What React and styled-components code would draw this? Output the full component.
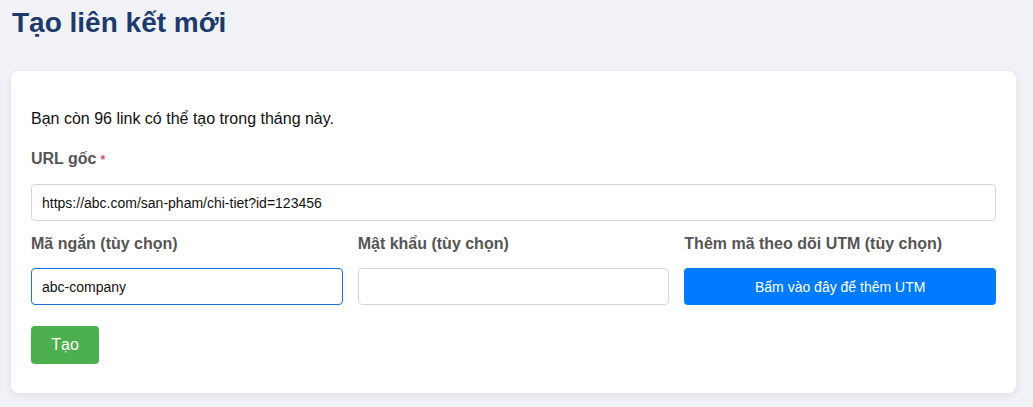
import React, { useState } from "react";
import styled, { createGlobalStyle } from "styled-components";

const GlobalStyle = createGlobalStyle`
  html, body {
    margin: 0;
    padding: 0;
    background: #f0f2f5;
    font-family: "Liberation Sans", Arial, sans-serif;
  }
  * { box-sizing: border-box; }
`;

const Page = styled.div`
  padding: 0 17px 0 11px;
  min-height: 407px;
`;

const Title = styled.h1`
  margin: 0;
  padding: 7px 0 0 1px;
  height: 71px;
  font-size: 28px;
  font-weight: 700;
  color: #1e3a6b;
`;

const Card = styled.div`
  background: #fff;
  border-radius: 8px;
  box-shadow: 0 2px 8px rgba(0, 0, 0, 0.08);
  padding: 39px 20px 29px;
`;

const Note = styled.p`
  margin: 0 0 22px;
  font-size: 16px;
  line-height: 18px;
  color: #111;
`;

const Field = styled.div`
  display: flex;
  flex-direction: column;
  gap: 15px;
`;

const Label = styled.label`
  font-size: 16px;
  line-height: 18px;
  font-weight: 700;
  color: #555;
`;

const Req = styled.span`
  color: #e0465a;
  font-size: 12px;
  margin-left: 4px;
`;

const Input = styled.input`
  height: 37px;
  width: 100%;
  padding: 0 10px;
  border: 1px solid ${(p) => (p.$focus ? "#1a73d9" : "#d6d6d6")};
  border-radius: 4px;
  font-family: inherit;
  font-size: 14px;
  color: #111;
  outline: none;
`;

const Row = styled.div`
  display: grid;
  grid-template-columns: repeat(3, 1fr);
  gap: 15px;
  margin-top: 14px;
`;

const UtmButton = styled.button`
  height: 37px;
  border: none;
  border-radius: 4px;
  background: #007bff;
  color: #fff;
  font-family: inherit;
  font-size: 14px;
  cursor: pointer;
`;

const Submit = styled.button`
  margin-top: 21px;
  width: 68px;
  height: 38px;
  border: none;
  border-radius: 4px;
  background: #4caf50;
  color: #fff;
  font-family: inherit;
  font-size: 16px;
  cursor: pointer;
`;

export default function App() {
  const [url, setUrl] = useState("https://abc.com/san-pham/chi-tiet?id=123456");
  const [slug, setSlug] = useState("abc-company");
  const [pass, setPass] = useState("");

  return (
    <Page>
      <GlobalStyle />
      <Title>Tạo liên kết mới</Title>
      <Card>
        <Note>Bạn còn 96 link có thể tạo trong tháng này.</Note>
        <Field>
          <Label>
            URL gốc<Req>*</Req>
          </Label>
          <Input value={url} onChange={(e) => setUrl(e.target.value)} />
        </Field>
        <Row>
          <Field>
            <Label>Mã ngắn (tùy chọn)</Label>
            <Input $focus value={slug} onChange={(e) => setSlug(e.target.value)} />
          </Field>
          <Field>
            <Label>Mật khẩu (tùy chọn)</Label>
            <Input type="password" value={pass} onChange={(e) => setPass(e.target.value)} />
          </Field>
          <Field>
            <Label>Thêm mã theo dõi UTM (tùy chọn)</Label>
            <UtmButton>Bấm vào đây để thêm UTM</UtmButton>
          </Field>
        </Row>
        <Submit>Tạo</Submit>
      </Card>
    </Page>
  );
}
